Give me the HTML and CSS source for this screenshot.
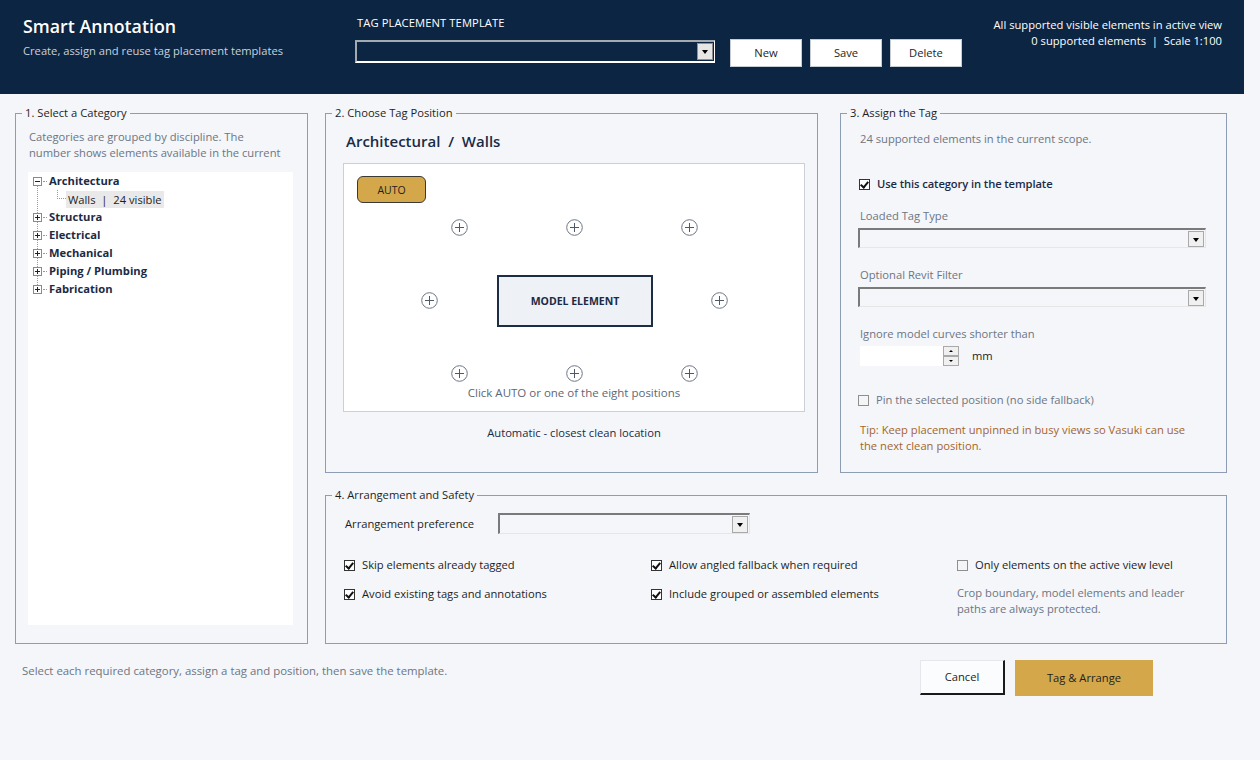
FILE: index.html
```html
<!DOCTYPE html>
<html>
  <head>
    <meta charset="utf-8">
    <link rel="stylesheet" href="styles.css">
  </head>
  <body>
    <header class="topbar">
      <div class="brand">
        <h1>Smart Annotation</h1>
        <p>Create, assign and reuse tag placement templates</p>
      </div>
      <div class="template">
        <div class="template-label">TAG PLACEMENT TEMPLATE</div>
        <div class="template-row">
          <div class="combo combo-dark"><span class="combo-btn"></span></div>
          <button class="btn">New</button>
          <button class="btn">Save</button>
          <button class="btn">Delete</button>
        </div>
      </div>
      <div class="scope">
        <div>All supported visible elements in active view</div>
        <div>0 supported elements &nbsp;|&nbsp; Scale 1:100</div>
      </div>
    </header>

    <main class="panels">
      <fieldset class="group group-category">
        <legend>1. Select a Category</legend>
        <p class="muted desc">Categories are grouped by discipline. The<br>number shows elements available in the current</p>
        <div class="tree">
          <span class="tree-rail"></span>
          <div class="node">
            <svg class="expander" viewBox="0 0 9 9"><rect x="0.5" y="0.5" width="8" height="8" fill="#fff" stroke="#8a8a8a"/><path d="M2 4.5h5" stroke="#222"/></svg>
            <span class="stub"></span><b>Architectura</b>
          </div>
          <div class="node child">
            <span class="elbow"></span><span class="leaf">Walls &nbsp;|&nbsp; 24 visible</span>
          </div>
          <div class="node">
            <svg class="expander" viewBox="0 0 9 9"><rect x="0.5" y="0.5" width="8" height="8" fill="#fff" stroke="#8a8a8a"/><path d="M2 4.5h5M4.5 2v5" stroke="#222"/></svg>
            <span class="stub"></span><b>Structura</b>
          </div>
          <div class="node">
            <svg class="expander" viewBox="0 0 9 9"><rect x="0.5" y="0.5" width="8" height="8" fill="#fff" stroke="#8a8a8a"/><path d="M2 4.5h5M4.5 2v5" stroke="#222"/></svg>
            <span class="stub"></span><b>Electrical</b>
          </div>
          <div class="node">
            <svg class="expander" viewBox="0 0 9 9"><rect x="0.5" y="0.5" width="8" height="8" fill="#fff" stroke="#8a8a8a"/><path d="M2 4.5h5M4.5 2v5" stroke="#222"/></svg>
            <span class="stub"></span><b>Mechanical</b>
          </div>
          <div class="node">
            <svg class="expander" viewBox="0 0 9 9"><rect x="0.5" y="0.5" width="8" height="8" fill="#fff" stroke="#8a8a8a"/><path d="M2 4.5h5M4.5 2v5" stroke="#222"/></svg>
            <span class="stub"></span><b>Piping / Plumbing</b>
          </div>
          <div class="node">
            <svg class="expander" viewBox="0 0 9 9"><rect x="0.5" y="0.5" width="8" height="8" fill="#fff" stroke="#8a8a8a"/><path d="M2 4.5h5M4.5 2v5" stroke="#222"/></svg>
            <span class="stub"></span><b>Fabrication</b>
          </div>
        </div>
      </fieldset>

      <fieldset class="group group-position">
        <legend>2. Choose Tag Position</legend>
        <h2 class="crumb">Architectural &nbsp;/&nbsp; Walls</h2>
        <div class="canvas">
          <button class="auto">AUTO</button>
          <svg class="spot" style="left:107px;top:55px" viewBox="0 0 17 17"><circle cx="8.5" cy="8.5" r="7.8" fill="#fff" stroke="#6d7787"/><path d="M4 8.5h9M8.5 4v9" stroke="#4f5968"/></svg>
          <svg class="spot" style="left:222px;top:55px" viewBox="0 0 17 17"><circle cx="8.5" cy="8.5" r="7.8" fill="#fff" stroke="#6d7787"/><path d="M4 8.5h9M8.5 4v9" stroke="#4f5968"/></svg>
          <svg class="spot" style="left:337px;top:55px" viewBox="0 0 17 17"><circle cx="8.5" cy="8.5" r="7.8" fill="#fff" stroke="#6d7787"/><path d="M4 8.5h9M8.5 4v9" stroke="#4f5968"/></svg>
          <svg class="spot" style="left:77px;top:128px" viewBox="0 0 17 17"><circle cx="8.5" cy="8.5" r="7.8" fill="#fff" stroke="#6d7787"/><path d="M4 8.5h9M8.5 4v9" stroke="#4f5968"/></svg>
          <svg class="spot" style="left:367px;top:128px" viewBox="0 0 17 17"><circle cx="8.5" cy="8.5" r="7.8" fill="#fff" stroke="#6d7787"/><path d="M4 8.5h9M8.5 4v9" stroke="#4f5968"/></svg>
          <svg class="spot" style="left:107px;top:201px" viewBox="0 0 17 17"><circle cx="8.5" cy="8.5" r="7.8" fill="#fff" stroke="#6d7787"/><path d="M4 8.5h9M8.5 4v9" stroke="#4f5968"/></svg>
          <svg class="spot" style="left:222px;top:201px" viewBox="0 0 17 17"><circle cx="8.5" cy="8.5" r="7.8" fill="#fff" stroke="#6d7787"/><path d="M4 8.5h9M8.5 4v9" stroke="#4f5968"/></svg>
          <svg class="spot" style="left:337px;top:201px" viewBox="0 0 17 17"><circle cx="8.5" cy="8.5" r="7.8" fill="#fff" stroke="#6d7787"/><path d="M4 8.5h9M8.5 4v9" stroke="#4f5968"/></svg>
          <div class="model">MODEL ELEMENT</div>
          <div class="canvas-hint">Click AUTO or one of the eight positions</div>
        </div>
        <div class="result">Automatic - closest clean location</div>
      </fieldset>

      <fieldset class="group group-assign">
        <legend>3. Assign the Tag</legend>
        <p class="muted scope-count">24 supported elements in the current scope.</p>
        <label class="check strong"><span class="box checked"></span>Use this category in the template</label>
        <div class="field-label muted">Loaded Tag Type</div>
        <div class="combo combo-light"><span class="combo-btn"></span></div>
        <div class="field-label muted">Optional Revit Filter</div>
        <div class="combo combo-light"><span class="combo-btn"></span></div>
        <div class="field-label muted">Ignore model curves shorter than</div>
        <div class="numeric">
          <span class="numeric-box"></span>
          <span class="spinner"><span class="spin up"></span><span class="spin down"></span></span>
          <span class="unit">mm</span>
        </div>
        <label class="check muted pin"><span class="box"></span>Pin the selected position (no side fallback)</label>
        <p class="tip">Tip: Keep placement unpinned in busy views so Vasuki can use<br>the next clean position.</p>
      </fieldset>

      <fieldset class="group group-safety">
        <legend>4. Arrangement and Safety</legend>
        <div class="pref-row">
          <span class="pref-label">Arrangement preference</span>
          <div class="combo combo-light combo-pref"><span class="combo-btn"></span></div>
        </div>
        <div class="options">
          <label class="check"><span class="box checked"></span>Skip elements already tagged</label>
          <label class="check"><span class="box checked"></span>Allow angled fallback when required</label>
          <label class="check"><span class="box"></span>Only elements on the active view level</label>
          <label class="check"><span class="box checked"></span>Avoid existing tags and annotations</label>
          <label class="check"><span class="box checked"></span>Include grouped or assembled elements</label>
          <p class="muted protect">Crop boundary, model elements and leader<br>paths are always protected.</p>
        </div>
      </fieldset>
    </main>

    <footer class="footer">
      <p class="muted">Select each required category, assign a tag and position, then save the template.</p>
      <div class="actions">
        <button class="btn-cancel">Cancel</button>
        <button class="btn-primary">Tag &amp; Arrange</button>
      </div>
    </footer>
  </body>
</html>
```

FILE: styles.css
```css
* {
  box-sizing: border-box;
}

html, body {
  margin: 0;
  padding: 0;
}

body {
  width: 1260px;
  height: 760px;
  overflow: hidden;
  background: #f4f6fa;
  font-family: "Open Sans", "Noto Sans", sans-serif;
  font-size: 11.2px;
  line-height: 16px;
  color: #1e1e1e;
}

p, h1, h2 {
  margin: 0;
}

button {
  font: inherit;
  color: inherit;
  cursor: pointer;
}

.muted {
  color: #6d7582;
}

/* header */

.topbar {
  display: flex;
  height: 94px;
  margin-right: 16px;
  background: #0c2542;
  color: #fff;
}

.brand {
  width: 355px;
  padding: 14px 0 0 23px;
}

.brand h1 {
  font-size: 17.8px;
  font-weight: 600;
  line-height: 24px;
}

.brand p {
  margin-top: 5px;
  color: #c9d2dd;
}

.template {
  padding-top: 15px;
}

.template-label {
  padding-left: 2px;
  font-weight: 500;
  letter-spacing: 0.1px;
}

.template-row {
  display: flex;
  align-items: flex-start;
  margin-top: 8px;
}

.btn {
  width: 72px;
  height: 28px;
  margin-left: 8px;
  border: 1px solid #c6ccd4;
  background: #fff;
  color: #1e1e1e;
}

.template-row .btn:first-of-type {
  margin-left: 15px;
}

.scope {
  margin-left: auto;
  padding: 17px 22px 0 0;
  text-align: right;
}

/* combo boxes */

.combo {
  position: relative;
  border: 1px solid;
}

.combo-btn {
  position: absolute;
  right: 1px;
  top: 1px;
  width: 16px;
  height: 16px;
  background: #f0f0f0;
  border: 1px solid #a9a9a9;
}

.combo-btn::after {
  content: "";
  position: absolute;
  left: 4px;
  top: 6px;
  border-left: 3.5px solid transparent;
  border-right: 3.5px solid transparent;
  border-top: 4px solid #000;
}

.combo-dark {
  width: 360px;
  height: 23px;
  margin-top: 1px;
  background: #0c2542;
  border-width: 2px 1px 2px 2px;
  border-color: #a5aab0 #ffffff #ffffff #a5aab0;
}

.combo-dark .combo-btn {
  top: 1px;
  right: 1px;
  height: 17px;
  background: #e6e6e6;
  border-color: #8f8f8f;
}

.combo-light {
  width: 348px;
  height: 20px;
  margin-left: -2px;
  border-color: #7a7a7a #e6e6e6 #e6e6e6 #7a7a7a;
  border-width: 2px 1px 1px 2px;
}

/* panels */

.panels {
  display: grid;
  grid-template-columns: 293px 493px 392px;
  grid-template-rows: 368px 157px;
  column-gap: 17px;
  row-gap: 14px;
  padding: 11px 0 0 15px;
}

.group {
  --pad: 12px;
  margin: 0;
  min-width: 0;
  padding: 8px 12px 0 var(--pad);
  border: 1px solid #8c9db5;
}

.group legend {
  margin-left: calc(6px - var(--pad));
  padding: 0 3px;
  line-height: 16px;
}

.group-category {
  grid-row: 1 / 3;
}

.desc {
  margin-left: 1px;
}

.tree {
  position: relative;
  width: 265px;
  height: 453px;
  margin-top: 11px;
  background: #fff;
  color: #1b2b45;
}

.tree-rail {
  position: absolute;
  left: 9px;
  top: 9px;
  height: 108px;
  border-left: 1px dotted #9a9a9a;
}

.node {
  position: relative;
  display: flex;
  align-items: center;
  height: 18px;
  padding-left: 5px;
}

.node b {
  font-weight: 700;
}

.expander {
  width: 9px;
  height: 9px;
  flex: none;
}

.stub {
  width: 4px;
  margin: 0 2px 0 1px;
  border-top: 1px dotted #9a9a9a;
}

.node.child {
  padding-left: 29px;
}

.elbow {
  align-self: flex-start;
  width: 9px;
  height: 9px;
  border-left: 1px dotted #9a9a9a;
  border-bottom: 1px dotted #9a9a9a;
}

.leaf {
  height: 17px;
  padding: 0 2px;
  background: #e9e9ea;
  color: #1e1e1e;
  line-height: 17px;
}

/* tag position */

.group-position {
  --pad: 17px;
  padding-top: 9px;
}

.crumb {
  margin-left: 3px;
  font-size: 15px;
  font-weight: 600;
  line-height: 22px;
  color: #1b2b45;
}

.canvas {
  position: relative;
  width: 462px;
  height: 249px;
  margin-top: 11px;
  background: #fff;
  border: 1px solid #cbd0d8;
}

.auto {
  position: absolute;
  left: 13px;
  top: 12px;
  width: 69px;
  height: 27px;
  padding: 0;
  background: #d4a84a;
  border: 1px solid #3a3a35;
  border-radius: 6px;
  font-size: 10.5px;
  color: #1e1e1e;
}

.spot {
  position: absolute;
  width: 17px;
  height: 17px;
}

.model {
  position: absolute;
  left: 153px;
  top: 111px;
  width: 156px;
  height: 52px;
  display: flex;
  align-items: center;
  justify-content: center;
  background: #eef1f5;
  border: 2px solid #1c2d44;
  font-size: 10.5px;
  font-weight: 700;
  color: #1b2b45;
}

.canvas-hint {
  position: absolute;
  left: 0;
  right: 0;
  top: 221px;
  text-align: center;
  font-size: 11.5px;
  color: #5d6776;
}

.result {
  margin-top: 13px;
  text-align: center;
  font-weight: 500;
  color: #1b2b45;
}

/* assign */

.group-assign {
  --pad: 19px;
  margin-left: 5px;
}

.scope-count {
  margin-top: 2px;
}

.check {
  display: flex;
  align-items: center;
  height: 16px;
}

.box {
  position: relative;
  width: 11px;
  height: 11px;
  margin-right: 7px;
  flex: none;
  background: #f4f5f7;
  border: 1px solid #8f8f8f;
}

.box.checked {
  background: #fff;
  border-color: #333;
}

.box.checked::after {
  content: "";
  position: absolute;
  left: 2px;
  top: 0;
  width: 3px;
  height: 6px;
  border-right: 2px solid #111;
  border-bottom: 2px solid #111;
  transform: rotate(40deg);
}

.strong {
  margin-top: 29px;
  margin-left: -1px;
  font-weight: 600;
  letter-spacing: -0.1px;
  color: #1b2b45;
}

.field-label {
  margin-top: 16px;
}

.field-label ~ .field-label {
  margin-top: 19px;
}

.field-label + .combo {
  margin-top: 4px;
}

.numeric {
  display: flex;
  align-items: center;
  height: 20px;
  margin-top: 4px;
}

.numeric-box {
  width: 83px;
  height: 20px;
  background: #fff;
}

.spinner {
  display: flex;
  flex-direction: column;
  width: 16px;
  height: 20px;
}

.spin {
  position: relative;
  flex: 1;
  background: #f0f0f0;
  border: 1px solid #a9a9a9;
}

.spin::after {
  content: "";
  position: absolute;
  left: 5px;
  top: 3px;
  border-left: 2px solid transparent;
  border-right: 2px solid transparent;
}

.spin.up::after {
  border-bottom: 2px solid #000;
}

.spin.down::after {
  border-top: 2px solid #000;
}

.unit {
  margin-left: 13px;
  color: #1e1e1e;
}

.pin {
  margin-top: 26px;
  margin-left: -2px;
}

.tip {
  margin-top: 14px;
  color: #a5652b;
}

/* arrangement */

.group-safety {
  --pad: 19px;
  grid-column: 2 / 4;
  padding-top: 10px;
}

.pref-row {
  display: flex;
  align-items: center;
  height: 21px;
}

.pref-label {
  width: 153px;
}

.combo-pref {
  width: 252px;
  height: 21px;
  margin-left: 0;
}

.combo-pref .combo-btn {
  height: 17px;
}

.options {
  display: grid;
  grid-template-columns: 307px 306px 1fr;
  row-gap: 13px;
  margin-top: 23px;
  margin-left: -1px;
}

.protect {
  margin-top: -1px;
}

/* footer */

.footer {
  display: flex;
  justify-content: space-between;
  align-items: flex-start;
  padding: 16px 107px 0 22px;
}

.footer p {
  margin-top: 3px;
  font-size: 11.4px;
}

.actions {
  display: flex;
  gap: 10px;
}

.btn-cancel {
  width: 85px;
  height: 35px;
  background: #fbfcfd;
  border-style: solid;
  border-width: 1px 2px 2px 1px;
  border-color: #e4e7eb #1a1a1a #1a1a1a #e4e7eb;
}

.btn-primary {
  width: 138px;
  height: 36px;
  background: #d4a84a;
  border: none;
  color: #1e1e1e;
}
```
